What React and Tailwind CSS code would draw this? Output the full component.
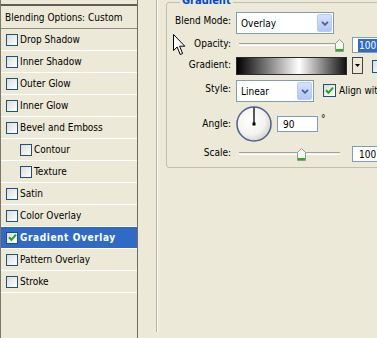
import React from 'react';

// Layer Style dialog: effects list on the left, Gradient Overlay settings on the right
const ITEMS = [
  { label: 'Drop Shadow' },
  { label: 'Inner Shadow' },
  { label: 'Outer Glow' },
  { label: 'Inner Glow' },
  { label: 'Bevel and Emboss' },
  { label: 'Contour', sub: true },
  { label: 'Texture', sub: true },
  { label: 'Satin' },
  { label: 'Color Overlay' },
  { label: 'Gradient Overlay', on: true },
  { label: 'Pattern Overlay' },
  { label: 'Stroke' },
];

function CheckBox({ checked, small }) {
  return (
    <span
      className={`flex shrink-0 items-center justify-center border border-[#1C5180] bg-linear-to-br from-[#DCDCD7] to-white ${small ? 'h-[12px] w-[12px]' : 'h-[13px] w-[13px]'}`}
    >
      {checked && (
        <svg width="9" height="9" viewBox="0 0 9 9">
          <path d="M1 4.2 3.4 6.8 8 1.6" fill="none" stroke="#21A121" strokeWidth="2" />
        </svg>
      )}
    </span>
  );
}

function DropButton() {
  return (
    <span className="flex w-[15px] shrink-0 items-center justify-center rounded-[2px] border border-[#B7CBF5] bg-linear-to-b from-[#D6E2FD] to-[#B2C7F6]">
      <svg width="8" height="5" viewBox="0 0 8 5">
        <path d="M1 0.8 4 3.8 7 0.8" fill="none" stroke="#4D6185" strokeWidth="1.8" />
      </svg>
    </span>
  );
}

function Thumb({ left }) {
  return (
    <svg className="absolute top-[2px]" style={{ left }} width="9" height="13" viewBox="0 0 9 13">
      <path d="M0.5 4.5 4.5 0.5 8.5 4.5V12.5H0.5Z" fill="#F6F6F2" stroke="#96968C" />
      <rect x="1" y="10" width="7" height="2" fill="#21B421" />
    </svg>
  );
}

function Slider({ thumb }) {
  return (
    <div className="relative h-[16px] w-[108px] shrink-0">
      <div className="absolute left-[3px] right-[4px] top-[6px] h-[3px] border-t border-b border-t-[#A3A195] border-b-white bg-[#F2F1EA]" />
      <Thumb left={thumb} />
    </div>
  );
}

function Label({ children, pad }) {
  return <span className={`w-[64px] shrink-0 text-right ${pad}`}>{children}</span>;
}

export default function App() {
  return (
    <div className="relative flex h-[338px] w-[377px] overflow-hidden bg-[#ECE9D8] font-['DejaVu_Sans_Condensed',Tahoma,'DejaVu_Sans',sans-serif] text-[10px] leading-[13px] text-black">
      {/* effects list */}
      <div className="flex h-full w-[138px] shrink-0 flex-col border-l border-r border-l-[#7A7869] border-r-[#6F6D63]">
        <div className="h-[4px]" />
        <div className="flex h-[25px] items-center border-t-2 border-b border-t-[#5E5C54] border-b-[#8E8C80] pl-[4px]">
          Blending Options: Custom
        </div>
        {ITEMS.map((it) => (
          <div
            key={it.label}
            className={`flex h-[22px] items-center gap-[2px] border-b border-white ${it.sub ? 'pl-[19px]' : 'pl-[5px]'} ${it.on ? 'bg-[#316AC5] font-bold tracking-[0.6px] text-white' : ''}`}
          >
            <CheckBox checked={it.on} small />
            <span>{it.label}</span>
          </div>
        ))}
      </div>

      {/* settings */}
      <div className="h-full flex-1">
        <div className="ml-[18px] h-full border-l border-[#B5B2A2] pl-[9px] shadow-[inset_1px_0_0_#fff]">
          <fieldset className="-mt-[6px] w-[260px] rounded-[3px] border border-[#C2BFAE] pb-[5px]">
            <legend className="ml-[13px] px-[2px] pb-[4px] text-[11px] font-bold leading-[13px] text-[#0046D5]">
              Gradient
            </legend>

            <div className="mt-[1px] flex items-start gap-[5px]">
              <Label pad="pt-[2px]">Blend Mode:</Label>
              <div className="flex h-[22px] w-[98px] border border-[#7F9DB9] bg-white p-px">
                <span className="flex flex-1 items-center pl-[3px]">Overlay</span>
                <DropButton />
              </div>
            </div>

            <div className="mt-[3px] flex items-start gap-[5px]">
              <Label pad="pt-0">Opacity:</Label>
              <Slider thumb={98.5} />
              <div className="ml-[3px] flex h-[16px] w-[40px] items-center border border-[#7F9DB9] bg-white pl-[5px]">
                <span className="bg-[#316AC5] px-px text-white">100</span>
              </div>
            </div>

            <div className="mt-[4px] flex items-start gap-[5px]">
              <Label pad="pt-[1px]">Gradient:</Label>
              <div className="h-[18px] w-[111px] border border-[#2A2A2A] bg-[linear-gradient(to_right,#000,#fff_57%,#111)]" />
              <div className="flex h-[17px] w-[11px] items-center justify-center border border-[#444] bg-[#ECE9D8]">
                <svg width="5" height="3" viewBox="0 0 5 3">
                  <path d="M0 0H5L2.5 3Z" fill="#000" />
                </svg>
              </div>
              <span className="ml-[4px] mt-[3px]">
                <CheckBox />
              </span>
            </div>

            <div className="mt-[5px] flex items-start gap-[5px]">
              <Label pad="pt-[2px]">Style:</Label>
              <div className="flex h-[22px] w-[78px] border border-[#7F9DB9] bg-white p-px">
                <span className="flex flex-1 items-center pl-[3px]">Linear</span>
                <DropButton />
              </div>
              <div className="ml-[4px] mt-[4px] flex items-center gap-[3px] whitespace-nowrap">
                <CheckBox checked />
                <span>Align with Layer</span>
              </div>
            </div>

            <div className="mt-[4px] flex items-start gap-[5px]">
              <Label pad="pt-[11px]">Angle:</Label>
              <svg width="36" height="36" viewBox="0 0 36 36" className="shrink-0">
                <defs>
                  <radialGradient id="dial" cx="40%" cy="40%" r="60%">
                    <stop offset="0%" stopColor="#FFFFFF" />
                    <stop offset="70%" stopColor="#F3F3EF" />
                    <stop offset="100%" stopColor="#D9D9D2" />
                  </radialGradient>
                </defs>
                <circle cx="18" cy="18" r="17" fill="url(#dial)" stroke="#4E6190" strokeWidth="1.5" />
                <line x1="18" y1="18" x2="18" y2="1.5" stroke="#000" strokeWidth="1.3" />
                <rect x="16.5" y="16.5" width="3" height="3" fill="#000" />
              </svg>
              <div className="mt-[10px] flex items-start gap-[3px]">
                <div className="flex h-[16px] w-[41px] items-center border border-[#7F9DB9] bg-white pl-[5px]">90</div>
                <span className="-mt-[4px]">°</span>
              </div>
            </div>

            <div className="mt-[4px] flex items-start gap-[5px]">
              <Label pad="pt-0">Scale:</Label>
              <Slider thumb={60.5} />
              <div className="ml-[3px] flex h-[16px] w-[40px] items-center border border-[#7F9DB9] bg-white pl-[6px]">100</div>
            </div>
          </fieldset>
        </div>
      </div>

      {/* mouse pointer */}
      <svg className="pointer-events-none absolute left-[173px] top-[34px]" width="13" height="22" viewBox="0 0 13 22">
        <path d="M0.5 0.5V16.5L4.2 13 7.2 20.5 9.6 19.5 6.6 12.2H11.8Z" fill="#fff" stroke="#000" strokeLinejoin="miter" />
      </svg>
    </div>
  );
}
